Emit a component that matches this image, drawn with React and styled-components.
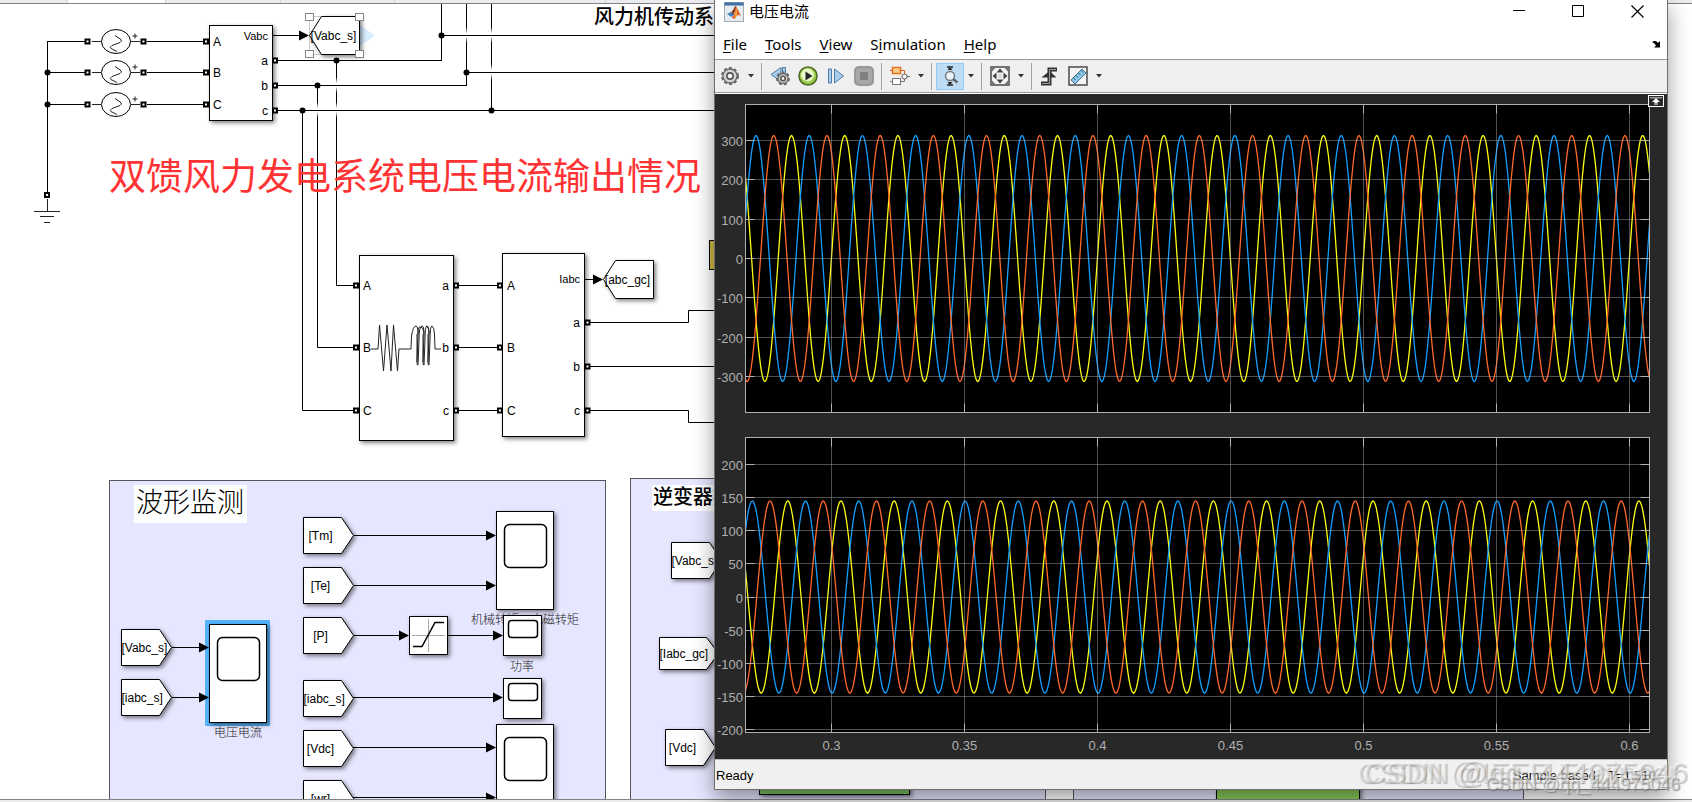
import React, { useLayoutEffect, useRef, useState } from 'react';
import styled, { createGlobalStyle } from 'styled-components';

const FROM_TAGS = [
  { label: '[Tm]', y: 535 },
  { label: '[Te]', y: 585 },
  { label: '[P]', y: 635 },
  { label: '[iabc_s]', y: 698 },
  { label: '[Vdc]', y: 748 },
  { label: '[wr]', y: 798 },
];

const MENUS = ['File', 'Tools', 'View', 'Simulation', 'Help'];

const TIME = { min: 0.26767, max: 0.60752, period: 0.02 };
const TIME_TICKS = [0.3, 0.35, 0.4, 0.45, 0.5, 0.55, 0.6];

const PLOTS = [
  {
    name: 'voltage',
    share: 308,
    min: -391.6,
    max: 391.6,
    amp: 312.7,
    ticks: [300, 200, 100, 0, -100, -200, -300],
    peak: 0.27163,
  },
  {
    name: 'current',
    share: 295,
    min: -204.5,
    max: 240.8,
    amp: 145,
    ticks: [200, 150, 100, 50, 0, -50, -100, -150, -200],
    peak: 0.27023,
  },
];

const PHASES = [
  { color: '#ffff11', shift: 2 / 3 },
  { color: '#139fff', shift: 0 },
  { color: '#ff6929', shift: 1 / 3 },
];

/* ---------- diagram parts ---------- */

const Port = ({ x, y }) => <PortBox x={x - 2} y={y - 2} width="4" height="4" />;

const Arrow = ({ x, y }) => <path d={`M${x} ${y}l-10 -5v10z`} />;

const Dot = ({ x, y }) => <circle cx={x} cy={y} r="3" />;

// fades a vertical wire where another one passes over it
const Gap = ({ x, y }) => <rect x={x - 1} y={y - 8} width="3" height="16" fill="url(#gap)" />;

const FromTag = ({ x, y, label, body = 38, tip = 12, half = 18 }) => {
  const long = label.length > 6;
  return (
    <g>
      <Block as="path" d={`M${x} ${y - half}h${body}l${tip} ${half}l${-tip} ${half}h${-body}z`} />
      <Label x={long ? x : x + 17} y={y + 4} $anchor={long ? 'start' : 'middle'}>
        {label}
      </Label>
    </g>
  );
};

const GotoTag = ({ x, y, label }) => (
  <g>
    <Block as="path" d={`M${x} ${y}l12 -19h38v38h-38z`} />
    <Label x={x + 24} y={y + 4} $anchor="middle">
      {label}
    </Label>
  </g>
);

const BigScope = ({ x, y }) => (
  <g>
    <Block x={x} y={y} width="57" height="98" />
    <Screen x={x + 8} y={y + 13} width="42" height="43" rx="5" />
  </g>
);

const SmallScope = ({ x, y }) => (
  <g>
    <Block x={x} y={y} width="38" height="40" />
    <Screen x={x + 5} y={y + 5} width="29" height="17" rx="3" />
  </g>
);

const Source = ({ y }) => (
  <g>
    <Wire d={`M47.5 ${y}H87M147 ${y}H204`} />
    <Thin d={`M92 ${y}H101M131 ${y}H140`} />
    <ellipse cx="116" cy={y} rx="14.5" ry="12" fill="#fff" stroke="#000" />
    <Thin d={`M115 ${y - 6}l6 4q1 2 -1 3l-8 3q-3 2 -1 3l6 3`} />
    <Thin d={`M132.500 ${y - 5.5}h5M135 ${y - 8}v5`} />
    <Port x={87.5} y={y} />
    <Port x={143.5} y={y} />
  </g>
);

const Diagram = () => (
  <Drawing>
    <defs>
      <linearGradient id="gap" x1="0" y1="0" x2="0" y2="1">
        <stop offset="0" stopColor="#fff" stopOpacity="0" />
        <stop offset="0.4" stopColor="#fff" />
        <stop offset="0.6" stopColor="#fff" />
        <stop offset="1" stopColor="#fff" stopOpacity="0" />
      </linearGradient>
    </defs>
    <g transform="translate(0 -4)">
      {/* grid side */}
      <Wire d="M47.5 41V194M336.500 60V285.500H354M317.500 85V347.500H354M302.500 110V410.500H354" />
      <Wire d="M441.500 4V61M466.500 4V86M491.500 4V111" />
      <Gap x={336} y={85} />
      <Gap x={336} y={110} />
      <Gap x={317} y={110} />
      <Gap x={466} y={35} />
      <Gap x={491} y={35} />
      <Gap x={491} y={72} />
      <Wire d="M278 60.500H442M278 85.500H467M278 110.500H716M441 35.500H716M466 72.500H716" />
      <Dot x={47.5} y={72.5} />
      <Dot x={47.5} y={104.5} />
      <Dot x={336.5} y={60.5} />
      <Dot x={317.5} y={85.5} />
      <Dot x={302.5} y={110.5} />
      <Dot x={441.5} y={35.5} />
      <Dot x={466.5} y={72.5} />
      <Dot x={491.5} y={110.5} />
      <Source y={41.5} />
      <Source y={72.5} />
      <Source y={104.5} />
      <Port x={47} y={195} />
      <Thin d="M47.500 199V211M34 211.500H60M40 216.500H54M44 222.500H50" />

      <Block x="209.500" y="25.500" width="63" height="95" />
      {[41.5, 72.5, 104.5].map((y, i) => (
        <g key={y}>
          <Port x={206} y={y} />
          <Label x="213" y={y + 4}>
            {'ABC'[i]}
          </Label>
        </g>
      ))}
      {[60.5, 85.5, 110.5].map((y, i) => (
        <g key={y}>
          <Port x={275} y={y} />
          <Label x="268" y={y + 4} $anchor="end">
            {'abc'[i]}
          </Label>
        </g>
      ))}
      <Label x="268" y="40" $anchor="end" $size={11}>
        Vabc
      </Label>
      <Wire d="M273 35.500H300" />
      <Arrow x={309} y={35.5} />
      <path d="M360 25l15 10.500l-15 10.500z" fill="#d9edff" />
      <rect x="309.500" y="16.500" width="50" height="38" fill="none" stroke="#ccc" />
      <GotoTag x={309.5} y={35.5} label="[Vabc_s]" />
      {[309.5, 359.5].map((x) =>
        [17, 54].map((y) => <Handle key={x + y} x={x - 4} y={y - 3.5} width="8" height="7" />)
      )}

      <Heading x="594" y="24" $size={20} $weight={500}>
        风力机传动系
      </Heading>
      <Heading x="109" y="190" $size={37} $color="#ff3333">
        双馈风力发电系统电压电流输出情况
      </Heading>

      {/* filter and measurement */}
      <Block x="359.500" y="255.500" width="94" height="185" />
      <Block x="502.500" y="253.500" width="82" height="183" />
      {[285.5, 347.5, 410.5].map((y, i) => (
        <g key={y}>
          <Wire d={`M459 ${y}H498`} />
          <Port x={356} y={y} />
          <Port x={456} y={y} />
          <Port x={500} y={y} />
          <Label x="363" y={y + 4}>
            {'ABC'[i]}
          </Label>
          <Label x="449" y={y + 4} $anchor="end">
            {'abc'[i]}
          </Label>
          <Label x="507" y={y + 4}>
            {'ABC'[i]}
          </Label>
        </g>
      ))}
      <Thin d="M371 349H378L379.500 325L383.500 371L387 325L391 371L393.500 325L397.500 371L399 349H411L411.500 336Q413 326 416 326Q418 326 418 334L417 362Q417 366 418 365L419 340Q419 326 422 326Q424 326 424 334L423 362Q423 366 424 365L425 340Q425 326 427 326Q429 326 429 334L428 362Q428 366 429 365L430 340Q430 326 432 326Q434 327 434.500 334L435 349H441" />
      <Thin d="M418 334Q418 327 420 327M424 334Q423 327 421 327M429 334Q429 326 426 326M417 334V362M423 334V362M428 334V362" />
      <Label x="580" y="283" $anchor="end" $size={11}>
        Iabc
      </Label>
      {[322.5, 366.5, 410.5].map((y, i) => (
        <g key={y}>
          <Port x={587.5} y={y} />
          <Label x="580" y={y + 4} $anchor="end">
            {'abc'[i]}
          </Label>
        </g>
      ))}
      <Wire d="M585 279.500H594M590 322.500H688.500V310.500H716M590 366.500H716M590 410.500H688.500V422.500H716" />
      <Arrow x={603} y={279.5} />
      <GotoTag x={603.5} y={279.5} label="[abc_gc]" />
      <rect x="709.500" y="240.500" width="20" height="29" fill="#d4b943" stroke="#000" />

      {/* waveform monitoring */}
      <Area x="109.500" y="480.500" width="496" height="330" />
      <rect x="134" y="485" width="113" height="38" fill="#fff" />
      <Heading x="136" y="512" $size={27} $weight={300}>
        波形监测
      </Heading>
      <Wire d="M353 535.500H490M353 585.500H490M353 635.500H400M447 635.500H494M353 697.500H494M353 747.500H490M353 797.500H490M172 647.500H200M172 697.500H200" />
      {FROM_TAGS.map((tag) => (
        <FromTag key={tag.label} x={303.5} y={tag.y + 0.5} label={tag.label} />
      ))}
      <FromTag x={121.5} y={647.5} label="[Vabc_s]" />
      <FromTag x={121.5} y={697.5} label="[iabc_s]" />
      <rect x="205" y="620" width="65" height="106" fill="#55b3fb" />
      <BigScope x={209.5} y={624.5} />
      <Arrow x={209} y={647.5} />
      <Arrow x={209} y={697.5} />
      <Caption x="238" y="737">
        电压电流
      </Caption>
      <Caption x="525" y="624">
        机械转矩、电磁转矩
      </Caption>
      <BigScope x={496.5} y={511.5} />
      <BigScope x={496.5} y={724.5} />
      <SmallScope x={503.5} y={615.5} />
      <SmallScope x={503.5} y={678.5} />
      <Caption x="522" y="671">
        功率
      </Caption>
      {[535.5, 585.5, 747.5, 797.5].map((y) => (
        <Arrow key={y} x={496} y={y} />
      ))}
      <Arrow x={503} y={635.5} />
      <Arrow x={503} y={697.5} />
      <Block x="409.500" y="616.500" width="38" height="38" />
      <path d="M412 635.500H445M428.500 619V652" stroke="#aaa" />
      <path d="M413 646.500H422L435 622.500H444" fill="none" stroke="#000" strokeWidth="1.500" />
      <Arrow x={409} y={635.5} />

      {/* inverter control */}
      <Area x="630.500" y="478.500" width="415" height="330" />
      <rect x="652" y="485" width="80" height="26" fill="#fff" />
      <Heading x="653" y="504" $size={20} $weight={500}>
        逆变器控
      </Heading>
      <FromTag x={671.5} y={560.5} label="[Vabc_s]" />
      <FromTag x={659.5} y={653.5} label="[Iabc_gc]" body={47} half={16} />
      <FromTag x={665.5} y={747.5} label="[Vdc]" />
      <Area x="1073.500" y="478.500" width="450" height="330" />
      <Block x="759.500" y="700.500" width="150" height="94" $fill="#7ac063" />
      <Block x="1216.500" y="700.500" width="143" height="104" $fill="#86ca57" />
    </g>
  </Drawing>
);

/* ---------- scope plots ---------- */

const wave = (plot, phase, x0, width, toY) => {
  const pts = [];
  for (let x = 0; x <= width; x += 1) {
    const t = TIME.min + ((TIME.max - TIME.min) * x) / width;
    const angle = 2 * Math.PI * ((t - plot.peak) / TIME.period - phase.shift);
    pts.push(`${x0 + x},${toY(plot.amp * Math.cos(angle)).toFixed(1)}`);
  }
  return pts.join(' ');
};

const Plots = () => {
  const box = useRef(null);
  const [size, setSize] = useState({ w: 952, h: 665 });

  useLayoutEffect(() => {
    const measure = () => setSize({ w: box.current.clientWidth, h: box.current.clientHeight });
    measure();
    const observer = new ResizeObserver(measure);
    observer.observe(box.current);
    return () => observer.disconnect();
  }, []);

  const left = 30.5;
  const width = Math.max(size.w - 48, 100);
  const scale = Math.max(size.h - 62, 100) / 603;
  const toX = (t) => Math.round(((t - TIME.min) / (TIME.max - TIME.min)) * width) + left;
  let top = 10.5;

  return (
    <PlotArea ref={box}>
      <Drawing>
        {PLOTS.map((plot) => {
          const y0 = top;
          const height = Math.round(plot.share * scale);
          top += height + 25;
          const toY = (v) => y0 + ((plot.max - v) / (plot.max - plot.min)) * height;
          const right = left + width;
          return (
            <g key={plot.name}>
              <rect x={left} y={y0} width={width} height={height} fill="#000" />
              {PHASES.map((phase) => (
                <polyline
                  key={phase.color}
                  points={wave(plot, phase, left, width, toY)}
                  fill="none"
                  stroke={phase.color}
                  strokeWidth="1.3"
                />
              ))}
              {plot.ticks.map((v) => {
                const y = Math.floor(toY(v)) + 0.5;
                return (
                  <g key={v}>
                    <GridLine d={`M${left} ${y}H${right}`} />
                    <TickLine d={`M${left} ${y}h9M${right} ${y}h-9`} />
                    <AxisText x="28" y={Math.round(toY(v) + 5.5)} $anchor="end">
                      {v}
                    </AxisText>
                  </g>
                );
              })}
              {TIME_TICKS.map((t) => (
                <g key={t}>
                  <GridLine d={`M${toX(t)} ${y0}v${height}`} />
                  <TickLine d={`M${toX(t)} ${y0}v9M${toX(t)} ${y0 + height}v-9`} />
                  {plot.name === 'current' && (
                    <AxisText x={toX(t)} y={y0 + height + 17} $anchor="middle">
                      {t}
                    </AxisText>
                  )}
                </g>
              ))}
              <rect x={left} y={y0} width={width} height={height} fill="none" stroke="#afafaf" />
            </g>
          );
        })}
      </Drawing>
      <DockButton aria-label="Maximize axes">
        <svg width="12" height="8" viewBox="0 0 12 8">
          <path d="M0 0h12v1.500H0z" fill="#999" />
          <path d="M6 1l4 4H7.500v3h-1v-2h-1v2h-1V5H2z" fill="#fff" />
        </svg>
      </DockButton>
    </PlotArea>
  );
};

/* ---------- icons ---------- */

const Gear = ({ x = 10, y = 10, r = 6, fill = '#d4d4d4' }) => (
  <g>
    <circle cx={x} cy={y} r={r + 1} fill="none" stroke="#6a6a6a" strokeWidth="2" strokeDasharray="3 2.2" />
    <circle cx={x} cy={y} r={r} fill={fill} stroke="#6a6a6a" strokeWidth="1.3" />
    <circle cx={x} cy={y} r={r * 0.45} fill="#f4f4f4" stroke="#555" strokeWidth="1.6" />
  </g>
);

const icons = {
  gear: <Gear r={7} />,
  back: (
    <>
      <path d="M1 8.500l10 -7v14z" fill="#a9cdea" stroke="#4a7ba6" />
      <path d="M12.500 1.500h3v10h-3z" fill="#a9cdea" stroke="#4a7ba6" />
      <Gear x={13} y={12.5} r={5} />
    </>
  ),
  play: (
    <>
      <circle cx="10" cy="10" r="9" fill="#9ccc48" stroke="#4f6b2a" strokeWidth="1.600" />
      <circle cx="9.500" cy="9" r="6.500" fill="#e8f6c8" />
      <path d="M7.500 5.500l7 4.500l-7 4.500z" fill="#262626" />
    </>
  ),
  step: (
    <>
      <path d="M2.500 3h3v14h-3z" fill="#a9cdea" stroke="#4a7ba6" />
      <path d="M8.500 3l9 7l-9 7z" fill="#a9cdea" stroke="#4a7ba6" />
    </>
  ),
  stop: (
    <>
      <rect width="20" height="20" rx="5" fill="#979797" />
      <rect x="2" y="2" width="16" height="16" rx="4" fill="#a6a6a6" />
      <rect x="6" y="6" width="8" height="8" fill="#808080" />
    </>
  ),
  blocks: (
    <>
      <path d="M0 15.500h2M11 15.500h3.500v-3M17 10.500h3" fill="none" stroke="#777" />
      <path d="M0 4.500h2M11 4.500h3.500v3.500" fill="none" stroke="#d9601a" />
      <rect x="2.500" y="1.500" width="8" height="6" fill="#ffd08a" stroke="#e0701f" strokeWidth="1.500" />
      <rect x="2.500" y="12.500" width="8" height="6" fill="#fff" stroke="#777" />
      <circle cx="14.500" cy="10.500" r="2.500" fill="#fff" stroke="#555" />
    </>
  ),
  zoom: (
    <>
      <path d="M7 1h6M7 19h6" stroke="#222" strokeWidth="1.600" />
      <path d="M7.500 4h5l-2.500 -3zM7.500 16h5l-2.500 3z" fill="#222" />
      <circle cx="10" cy="10" r="4.500" fill="#e6f3fc" stroke="#777" strokeWidth="1.500" />
      <path d="M13 13l4.500 3.500" stroke="#666" strokeWidth="2.400" />
    </>
  ),
  fit: (
    <>
      <rect x="1" y="1" width="18" height="18" fill="#f6f6f6" stroke="#555" strokeWidth="1.600" />
      <path d="M1.500 1.500h4.500l-4.500 4.500zM18.500 1.500v4.500l-4.500 -4.500zM1.500 18.500v-4.500l4.500 4.500zM18.500 18.500h-4.500l4.500 -4.500z" fill="#777" />
      <path d="M10 2.500l3.500 4h-7zM10 17.500l3.500 -4h-7zM2.500 10l4 -3.500v7zM17.500 10l-4 -3.500v7z" fill="#444" />
      <circle cx="10" cy="10" r="2.500" fill="#ddd" />
    </>
  ),
  trigger: (
    <>
      <path d="M1 17.500h8.500V3.500H17" fill="none" stroke="#333" strokeWidth="4" />
      <path d="M1.500 11.500L9.500 5l7 6.500z" fill="#333" />
      <path d="M2 17.500h7.500V3.500H16" fill="none" stroke="#999" />
    </>
  ),
  ruler: (
    <>
      <rect x="1" y="1" width="18" height="18" fill="#f4f4f4" stroke="#555" strokeWidth="1.600" />
      <path d="M3 14L14 3l4 4L7 18z" fill="#8fc7e6" stroke="#3d7397" />
      <path d="M5.500 12l2 2M8 9.500l2 2M10.500 7l2 2M13 4.500l2 2" stroke="#28577a" />
    </>
  ),
};

const Tool = ({ icon, active }) => (
  <ToolButton $active={active} aria-label={icon}>
    <svg width="20" height="20" viewBox="0 0 20 20">
      {icons[icon]}
    </svg>
  </ToolButton>
);

const Caret = () => (
  <CaretButton aria-label="More">
    <svg width="6" height="4" viewBox="0 0 6 4">
      <path d="M0 0h6l-3 3.500z" fill="#333" />
    </svg>
  </CaretButton>
);

const MatlabLogo = () => (
  <svg width="20" height="20" viewBox="0 0 20 20">
    <rect x="0.500" y="0.500" width="19" height="19" fill="#e6ebf0" stroke="#a3acb5" />
    <rect x="0.500" y="0.500" width="19" height="3" fill="#3e6fa8" />
    <path d="M3 12l4 -2l3 3l-2.500 2z" fill="#3f7fc0" />
    <path d="M7 10q2 -1 4 -6q1 0 1.500 2l-3 7z" fill="#8a3b1e" />
    <path d="M8 15q3 0 4 -11q1 2 5 10q-3 -2 -4.500 0q-1.500 3 -2.500 3q-1 0 -2 -2z" fill="#dd5a21" />
    <path d="M12 5q2 4 1 8l-2.500 4q-.5 -2 .5 -4z" fill="#f3a23b" />
  </svg>
);

const ScopeWindow = () => (
  <Window>
    <TitleBar>
      <MatlabLogo />
      <Title>电压电流</Title>
      <WindowButton aria-label="Minimize">
        <svg width="13" height="13">
          <path d="M0 5.500h12" stroke="#000" />
        </svg>
      </WindowButton>
      <WindowButton aria-label="Maximize">
        <svg width="13" height="13">
          <path d="M.5 .5h11v11h-11z" fill="none" stroke="#000" />
        </svg>
      </WindowButton>
      <WindowButton aria-label="Close">
        <svg width="13" height="13">
          <path d="M.5 .5l12 12M12.500 .5l-12 12" stroke="#000" strokeWidth="1.200" />
        </svg>
      </WindowButton>
    </TitleBar>
    <MenuBar>
      {MENUS.map((name) => {
        const at = name === 'Simulation' ? 1 : 0;
        return (
          <MenuButton key={name}>
            {name.slice(0, at)}
            <u>{name[at]}</u>
            {name.slice(at + 1)}
          </MenuButton>
        );
      })}
      <Undock aria-label="Dock">
        <svg width="10" height="8" viewBox="0 0 10 8">
          <path d="M0 2q4 -2.500 6 1l2 -2v6.500h-6l2 -2q-1 -2.500 -4 -3.500z" fill="#000" />
        </svg>
      </Undock>
    </MenuBar>
    <ToolBar>
      <ToolGroup>
        <Tool icon="gear" />
        <Caret />
      </ToolGroup>
      <ToolGroup>
        <Tool icon="back" />
        <Tool icon="play" />
        <Tool icon="step" />
        <Tool icon="stop" />
      </ToolGroup>
      <ToolGroup>
        <Tool icon="blocks" />
        <Caret />
      </ToolGroup>
      <ToolGroup>
        <Tool icon="zoom" active />
        <Caret />
      </ToolGroup>
      <ToolGroup>
        <Tool icon="fit" />
        <Caret />
      </ToolGroup>
      <ToolGroup>
        <Tool icon="trigger" />
        <Tool icon="ruler" />
        <Caret />
      </ToolGroup>
    </ToolBar>
    <Plots />
    <StatusBar>
      <StatusText>Ready</StatusText>
      <StatusCell>Sample based</StatusCell>
      <StatusCell>T=1.510</StatusCell>
    </StatusBar>
  </Window>
);

export default function App() {
  return (
    <>
      <GlobalStyle />
      <Page>
        <TabStrip>
          <Tab $width={68} />
          <Tab $width={98} $active />
          <Tab $width={115} />
          <Tab $width={114} />
          <Tab $width={211} />
        </TabStrip>
        <Canvas>
          <Diagram />
        </Canvas>
        <BottomBar />
        <ScopeWindow />
        <Watermark $size={30} $right={14} $bottom={14}>
          CSDN @IEEE Engineer
        </Watermark>
        <Watermark $size={30} $right={4} $bottom={14}>
          CSDN @qq_444975046
        </Watermark>
        <Watermark $size={18} $right={12} $bottom={9} $dark>
          CSDN @qq_444975046
        </Watermark>
      </Page>
    </>
  );
}

/* ---------- styles ---------- */

const GlobalStyle = createGlobalStyle`
  * {
    box-sizing: border-box;
  }
  body {
    margin: 0;
    overflow: hidden;
    font-family: 'Liberation Sans', 'Noto Sans CJK SC', sans-serif;
    color: #000;
  }
  button {
    border: 0;
    padding: 0;
    background: none;
    font: inherit;
    color: inherit;
  }
`;

const Page = styled.div`
  position: relative;
  display: flex;
  flex-direction: column;
  height: 100vh;
  overflow: hidden;
  background: #fff;
`;

const TabStrip = styled.div`
  display: flex;
  height: 4px;
  background: #ececf0;
  border-bottom: 1px solid #828287;
`;

const Tab = styled.div`
  width: ${(p) => p.$width}px;
  background: ${(p) => (p.$active ? '#fff' : '#ececf0')};
  border-right: 1px solid #cfcfd4;
`;

const Canvas = styled.main`
  flex: 1;
  min-height: 0;
`;

const BottomBar = styled.div`
  height: 3px;
  background: #ebebeb;
  border-top: 1px solid #828287;
`;

const Drawing = styled.svg`
  display: block;
  width: 100%;
  height: 100%;
`;

const Block = styled.rect`
  fill: ${(p) => p.$fill || '#fff'};
  stroke: #000;
  filter: drop-shadow(2px 2px 2px rgba(0, 0, 0, 0.5));
`;

const Screen = styled.rect`
  fill: #fff;
  stroke: #000;
  stroke-width: 1.5;
`;

const Area = styled.rect`
  fill: #e6e6ff;
  stroke: #55555c;
`;

const PortBox = styled.rect`
  fill: #fff;
  stroke: #000;
  stroke-width: 2;
`;

const Handle = styled.rect`
  fill: #fff;
  stroke: #858585;
`;

const Wire = styled.path`
  fill: none;
  stroke: #000;
`;

const Thin = styled.path`
  fill: none;
  stroke: #222;
`;

const Label = styled.text`
  font-size: ${(p) => p.$size || 12}px;
  text-anchor: ${(p) => p.$anchor || 'start'};
`;

const Caption = styled.text`
  font-size: 12px;
  font-weight: 300;
  text-anchor: middle;
  fill: #222;
`;

const Heading = styled.text`
  font-family: 'Noto Sans CJK SC', sans-serif;
  font-size: ${(p) => p.$size}px;
  font-weight: ${(p) => p.$weight || 400};
  fill: ${(p) => p.$color || '#000'};
`;

const Window = styled.section`
  position: absolute;
  top: 0;
  right: 24px;
  bottom: 12px;
  left: 714px;
  display: flex;
  flex-direction: column;
  background: #fff;
  border: 1px solid #6e6e6e;
  border-top: 0;
  box-shadow: 0 8px 20px rgba(0, 0, 0, 0.4);
`;

const TitleBar = styled.header`
  display: flex;
  align-items: center;
  height: 23px;
  padding-left: 9px;
`;

const Title = styled.h1`
  flex: 1;
  margin: 0 0 0 5px;
  font-size: 15px;
  font-weight: 400;
  line-height: 22px;
`;

const WindowButton = styled.button`
  display: flex;
  align-items: center;
  justify-content: center;
  width: 59px;
  height: 23px;
`;

const MenuBar = styled.nav`
  display: flex;
  align-items: center;
  height: 37px;
  padding: 6px 5px 0 8px;
  gap: 18px;
  border-bottom: 1px solid #999;
`;

const MenuButton = styled.button`
  font-family: 'Noto Sans', sans-serif;
  font-size: 15px;
  line-height: 20px;

  u {
    text-underline-offset: 2px;
  }
`;

const Undock = styled.button`
  display: flex;
  margin-left: auto;
`;

const ToolBar = styled.div`
  display: flex;
  align-items: center;
  height: 33px;
  background: #efefef;
  border-bottom: 1px solid #999;
`;

const ToolGroup = styled.div`
  display: flex;
  align-items: center;
  height: 27px;
  padding: 0 3px 0 4px;

  &:first-child {
    padding-left: 1px;
  }

  &:not(:last-child) {
    border-right: 1px solid #a0a0a0;
  }
`;

const ToolButton = styled.button`
  display: flex;
  align-items: center;
  justify-content: center;
  width: 28px;
  height: 27px;
  background: ${(p) => (p.$active ? '#bedcf4' : 'transparent')};
  box-shadow: ${(p) => (p.$active ? 'inset 0 0 0 1px #90c8f6' : 'none')};
`;

const CaretButton = styled.button`
  display: flex;
  align-items: center;
  justify-content: center;
  width: 14px;
  height: 27px;
`;

const PlotArea = styled.div`
  position: relative;
  flex: 1;
  min-height: 0;
  overflow: hidden;
  border-top: 1px solid #fff;
  background: #282828;
`;

const GridLine = styled.path`
  stroke: #afafaf;
  stroke-opacity: 0.45;
`;

const TickLine = styled.path`
  stroke: #afafaf;
`;

const AxisText = styled.text`
  font-size: 13px;
  fill: #afafaf;
  text-anchor: ${(p) => p.$anchor};
`;

const DockButton = styled.button`
  position: absolute;
  top: 1px;
  right: 3px;
  display: flex;
  width: 16px;
  height: 12px;
  border: 1px solid #fff;
  padding: 1px;
  background: #282828;
`;

const StatusBar = styled.footer`
  display: flex;
  align-items: center;
  height: 30px;
  padding: 2px 11px 0 1px;
  gap: 12px;
  background: #f0f0f0;
  border-top: 1px solid #bbb;
  font-size: 13px;
`;

const StatusText = styled.span`
  flex: 1;
`;

const StatusCell = styled.span`
  height: 20px;
  line-height: 20px;
`;

const Watermark = styled.span`
  position: absolute;
  right: ${(p) => p.$right}px;
  bottom: ${(p) => p.$bottom}px;
  font-size: ${(p) => p.$size}px;
  line-height: 1;
  white-space: nowrap;
  pointer-events: none;
  color: ${(p) => (p.$dark ? 'rgba(225, 225, 225, 0.5)' : 'rgba(240, 240, 240, 0.5)')};
  text-shadow: 1px 1px 1px rgba(90, 90, 90, ${(p) => (p.$dark ? 0.6 : 0.4)}),
    -1px -1px 1px rgba(255, 255, 255, 0.3);
`;
